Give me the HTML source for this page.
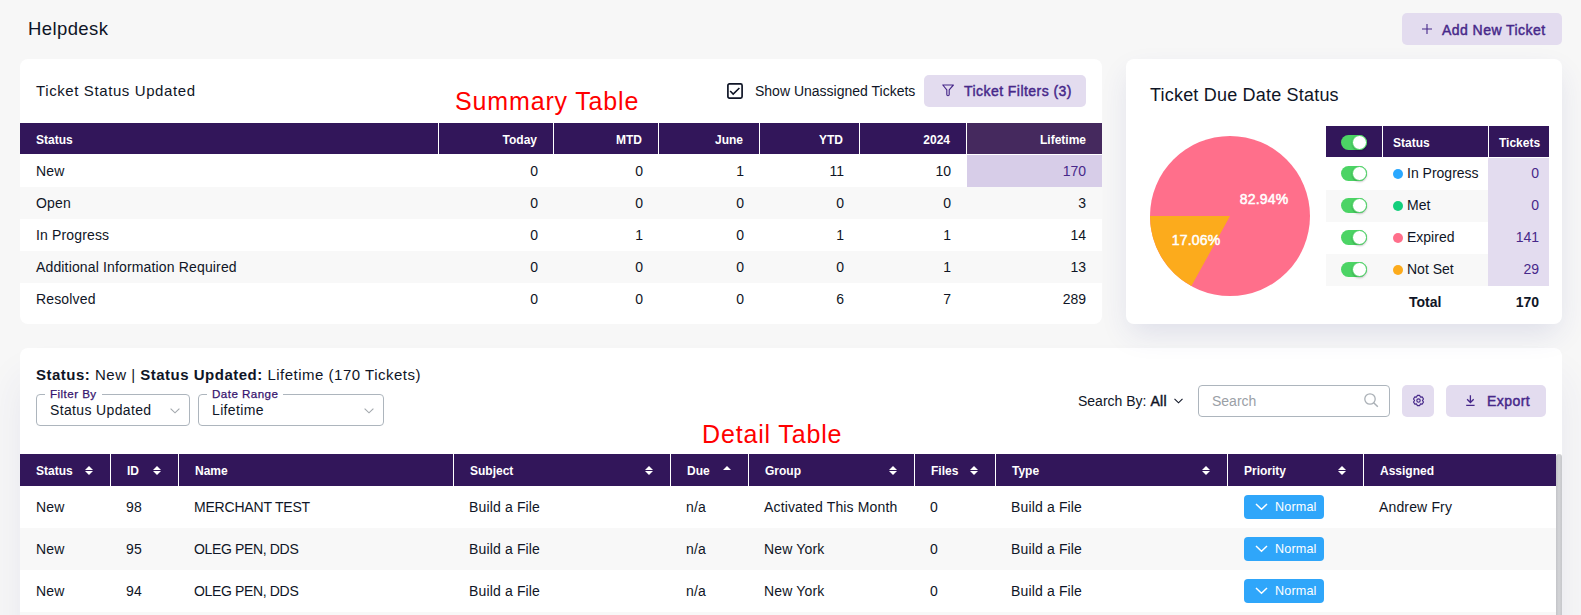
<!DOCTYPE html>
<html><head><meta charset="utf-8">
<style>
*{box-sizing:border-box;margin:0;padding:0}
html,body{width:1581px;height:615px;overflow:hidden;background:#f7f7f7;font-family:"Liberation Sans",sans-serif;color:#0f1526}
.abs{position:absolute;white-space:nowrap}
.card{position:absolute;background:#fff;border-radius:8px}
.btn{position:absolute;background:#e3dcef;border-radius:5px;color:#47288a;font-weight:normal;font-size:14px;letter-spacing:0.45px;-webkit-text-stroke:0.45px #47288a}
table{border-collapse:separate;border-spacing:0;table-layout:fixed}
td,th{white-space:nowrap}
.st th{background:#32165a;color:#fff;font-size:12px;font-weight:bold;height:32px;border-left:1px solid #fff;border-bottom:1px solid #fff;padding:2px 16px 0;text-align:right}
.st th:first-child{border-left:none;text-align:left}
.st td{height:32px;font-size:14px;padding:0 15px 0 16px;text-align:right;border-left:1px solid transparent}
.st td:first-child{text-align:left;border-left:none}
.st td:last-child{padding-right:16px}
.st td:first-child{letter-spacing:0.15px}
.st tr:nth-child(odd) td{background:#f8f8f8}
.st th.lt{background:#45295e}
.st tr td.hl{border-left:1px solid #fff;background:#d7cde8;color:#47288a}
.dt th{background:#32165a;color:#fff;font-size:12px;font-weight:bold;height:32px;border-left:1px solid #fff;padding:2px 16px 0;text-align:left;position:relative}
.dt th:first-child{border-left:none}
.dt td{height:42px;font-size:14px;padding:0 16px;text-align:left;letter-spacing:0.15px}
.dt tr:nth-child(odd) td{background:#f8f8f8}
.sort{position:absolute;right:17.5px;top:12px;width:8px;height:10px}
.sort:before{content:"";position:absolute;left:0;top:0;border-left:4px solid transparent;border-right:4px solid transparent;border-bottom:4px solid #fff}
.s2:after{content:"";position:absolute;left:0;top:5px;border-left:4px solid transparent;border-right:4px solid transparent;border-top:4px solid #fff}
.nb{display:inline-block;margin-left:1px;width:80px;height:24px;background:#2fa6fa;border-radius:4px;color:#fff;font-size:13px;position:relative;vertical-align:middle}
.rt th{background:#32165a;color:#fff;font-size:12px;font-weight:bold;height:32px;border-left:1px solid #fff;border-bottom:1px solid #fff;padding:2px 10px 0;text-align:left}
.rt th:first-child{border-left:none}
.rt td{height:32px;font-size:14px;padding:0 10px 2px;border-left:1px solid transparent}
.rt td:first-child{border-left:none}
.rt tr:nth-child(odd) td{background:#f8f8f8}
.rt tr td.tk{background:#e3dcef;color:#47288a;text-align:right}
.tg{display:inline-block;width:26px;height:15px;background:#4cd465;border-radius:8px;position:relative;vertical-align:middle}
.tg:after{content:"";position:absolute;right:0;top:0;width:15px;height:15px;border-radius:50%;background:#fff;box-shadow:0 1px 2px rgba(0,0,0,.25);border:1px solid #4cd465;box-sizing:border-box}
.dot{display:inline-block;width:10px;height:10px;border-radius:50%;margin-right:4px;vertical-align:-1px}
.red{position:absolute;color:#f00;font-size:25px;white-space:nowrap;letter-spacing:0.85px}
.fs{position:absolute;border:1px solid #adb5bd;border-radius:4px;height:32px}
.fs .lg{position:absolute;top:-8px;left:8px;background:#fff;padding:0 5px 0 5px;font-size:11.6px;letter-spacing:0.45px;color:#36146e;-webkit-text-stroke:0.25px #36146e;line-height:14px}
.fs .vl{position:absolute;left:13px;top:8px;font-size:14px;line-height:14px;letter-spacing:0.35px}
</style></head><body>

<div class="abs" style="left:28px;top:20px;font-size:18.5px;line-height:18px;letter-spacing:0.4px">Helpdesk</div>
<div class="btn" style="left:1402px;top:13px;width:160px;height:32px">
  <svg class="abs" style="left:20px;top:11px" width="10" height="10" viewBox="0 0 10 10"><path d="M5 0V10M0 5H10" stroke="#47288a" stroke-width="1.1"/></svg>
  <span class="abs" style="left:40px;top:10px;line-height:14px">Add New Ticket</span>
</div>

<!-- Summary card -->
<div class="card" style="left:20px;top:59px;width:1082px;height:265px;overflow:hidden">
  <div class="abs" style="left:16px;top:24px;font-size:15px;line-height:15px;letter-spacing:0.6px">Ticket Status Updated</div>
  <svg class="abs" style="left:707px;top:24px" width="16" height="16" viewBox="0 0 16 16"><rect x="0.9" y="0.9" width="14.2" height="14.2" rx="1.5" fill="none" stroke="#0f1526" stroke-width="1.7"/><path d="M3.2 8L6.2 11.1L12.4 5" fill="none" stroke="#0f1526" stroke-width="1.6"/></svg>
  <div class="abs" style="left:735px;top:25px;font-size:14px;line-height:14px">Show Unassigned Tickets</div>
  <div class="btn" style="left:904px;top:16px;width:162px;height:32px">
    <svg class="abs" style="left:18px;top:9px" width="12" height="13" viewBox="0 0 12 13"><path d="M0.8 1H11.4L7.2 5.8V10.6A1.2 1.2 0 0 1 4.8 10.6V5.8Z" fill="none" stroke="#47288a" stroke-width="1.15" stroke-linejoin="round"/></svg>
    <span class="abs" style="left:40px;top:9px;line-height:14px">Ticket Filters (3)</span>
  </div>
  <table class="st" style="position:absolute;left:0;top:64px;width:1082px">
    <colgroup><col style="width:418px"><col style="width:115px"><col style="width:105px"><col style="width:101px"><col style="width:100px"><col style="width:107px"><col style="width:136px"></colgroup>
    <tr><th>Status</th><th>Today</th><th>MTD</th><th>June</th><th>YTD</th><th>2024</th><th class="lt">Lifetime</th></tr>
    <tr><td>New</td><td>0</td><td>0</td><td>1</td><td>11</td><td>10</td><td class="hl" style="padding-right:16px">170</td></tr>
    <tr><td>Open</td><td>0</td><td>0</td><td>0</td><td>0</td><td>0</td><td>3</td></tr>
    <tr><td>In Progress</td><td>0</td><td>1</td><td>0</td><td>1</td><td>1</td><td>14</td></tr>
    <tr><td>Additional Information Required</td><td>0</td><td>0</td><td>0</td><td>0</td><td>1</td><td>13</td></tr>
    <tr><td>Resolved</td><td>0</td><td>0</td><td>0</td><td>6</td><td>7</td><td>289</td></tr>
  </table>
</div>
<div class="red" style="left:455px;top:88px;line-height:26px">Summary Table</div>

<!-- Right card -->
<div class="card" style="left:1126px;top:59px;width:436px;height:265px;box-shadow:0 12px 30px -4px rgba(45,55,140,0.13);z-index:2">
  <div class="abs" style="left:24px;top:27px;font-size:18px;line-height:18px;letter-spacing:0.2px">Ticket Due Date Status</div>
  <svg class="abs" style="left:23px;top:76px" width="162" height="162" viewBox="-81 -81 162 162">
    <circle r="80" fill="#ff6f8b"/>
    <path d="M0 0L-80 0A80 80 0 0 0 -38.6 70.1Z" fill="#fcab1c"/>
    <text x="34" y="-12" fill="#fff" font-size="14" font-family="Liberation Sans" stroke="#fff" stroke-width="0.5" letter-spacing="0.2" text-anchor="middle">82.94%</text>
    <text x="-34" y="29" fill="#fff" font-size="14" font-family="Liberation Sans" stroke="#fff" stroke-width="0.5" letter-spacing="0.2" text-anchor="middle">17.06%</text>
  </svg>
  <table class="rt" style="position:absolute;left:200px;top:67px;width:223px">
    <colgroup><col style="width:56px"><col style="width:106px"><col style="width:61px"></colgroup>
    <tr><th style="padding-left:15px"><span class="tg"></span></th><th>Status</th><th>Tickets</th></tr>
    <tr><td style="padding-left:15px"><span class="tg" style="top:0px"></span></td><td><span class="dot" style="background:#2aa8ff"></span>In Progress</td><td class="tk">0</td></tr>
    <tr><td style="padding-left:15px"><span class="tg" style="top:0px"></span></td><td><span class="dot" style="background:#13cf7c"></span>Met</td><td class="tk">0</td></tr>
    <tr><td style="padding-left:15px"><span class="tg" style="top:0px"></span></td><td><span class="dot" style="background:#ff6f8b"></span>Expired</td><td class="tk">141</td></tr>
    <tr><td style="padding-left:15px"><span class="tg" style="top:0px"></span></td><td><span class="dot" style="background:#fcab1c"></span>Not Set</td><td class="tk">29</td></tr>
    <tr><td style="background:#fff;padding-bottom:0"></td><td style="background:#fff;font-weight:bold;padding-left:26px;padding-bottom:0">Total</td><td style="text-align:right;font-weight:bold;background:#fff;padding-bottom:0">170</td></tr>
  </table>
</div>

<!-- Detail card -->
<div class="card" style="left:20px;top:348px;width:1542px;height:300px;overflow:hidden;box-shadow:0 30px 40px rgba(45,55,140,0.08)">
  <div class="abs" style="left:16px;top:19px;font-size:15px;line-height:15px;letter-spacing:0.5px"><b>Status:</b> New | <b>Status Updated:</b> Lifetime (170 Tickets)</div>
  <div class="fs" style="left:16px;top:46px;width:154px"><span class="lg">Filter By</span><span class="vl">Status Updated</span>
    <svg class="abs" style="left:133px;top:13px" width="10" height="6" viewBox="0 0 10 6"><path d="M0.6 0.6L5 4.8L9.4 0.6" fill="none" stroke="#a3a8ad" stroke-width="1.15"/></svg></div>
  <div class="fs" style="left:178px;top:46px;width:186px"><span class="lg">Date Range</span><span class="vl">Lifetime</span>
    <svg class="abs" style="left:165px;top:13px" width="10" height="6" viewBox="0 0 10 6"><path d="M0.6 0.6L5 4.8L9.4 0.6" fill="none" stroke="#a3a8ad" stroke-width="1.15"/></svg></div>

  <div class="abs" style="left:1058px;top:46px;font-size:14px;line-height:14px">Search By: <span style="-webkit-text-stroke:0.45px #0f1526;letter-spacing:0.3px">All</span></div>
  <svg class="abs" style="left:1154px;top:50px" width="9" height="6" viewBox="0 0 9 6"><path d="M0.5 0.8L4.5 4.8L8.5 0.8" fill="none" stroke="#0f1526" stroke-width="1.1"/></svg>
  <div class="fs" style="left:1178px;top:37px;width:192px"><span class="abs" style="left:13px;top:8px;font-size:14px;line-height:14px;color:#9aa0a6">Search</span>
    <svg class="abs" style="left:165px;top:7px" width="15" height="15" viewBox="0 0 15 15"><circle cx="6" cy="6" r="5.2" fill="none" stroke="#aab0b6" stroke-width="1.3"/><path d="M9.7 9.7L13.8 13.8" stroke="#aab0b6" stroke-width="1.5"/></svg></div>
  <div class="btn" style="left:1382px;top:37px;width:32px;height:32px">
    <svg class="abs" style="left:10px;top:9px" width="13" height="13" viewBox="-0.5 -0.5 13 13"><path d="M7.98 2.58 L7.17 0.93 L4.83 0.93 L4.03 2.58 L2.20 2.45 L1.03 4.48 L2.05 6.00 L1.03 7.52 L2.20 9.55 L4.02 9.42 L4.83 11.07 L7.17 11.07 L7.98 9.42 L9.80 9.55 L10.97 7.52 L9.95 6.00 L10.97 4.48 L9.80 2.45Z" fill="none" stroke="#47288a" stroke-width="1.2" stroke-linejoin="round"/><circle cx="6" cy="6" r="1.7" fill="none" stroke="#47288a" stroke-width="1.15"/></svg>
  </div>
  <div class="btn" style="left:1426px;top:37px;width:100px;height:32px">
    <svg class="abs" style="left:20px;top:10px" width="10" height="12" viewBox="0 0 10 12"><path d="M4.4 0.3V7.3M1.1 4.2L4.4 7.5L7.7 4.2M0.2 10.4H8.6" fill="none" stroke="#47288a" stroke-width="1.3"/></svg>
    <span class="abs" style="left:41px;top:9px;line-height:14px">Export</span>
  </div>

  <table class="dt" style="position:absolute;left:0;top:106px;width:1536px">
    <colgroup><col style="width:90px"><col style="width:68px"><col style="width:275px"><col style="width:217px"><col style="width:78px"><col style="width:166px"><col style="width:81px"><col style="width:232px"><col style="width:136px"><col style="width:193px"></colgroup>
    <tr><th>Status<span class="sort s2"></span></th><th>ID<span class="sort s2"></span></th><th>Name</th><th>Subject<span class="sort s2"></span></th><th>Due<span class="sort s1"></span></th><th>Group<span class="sort s2"></span></th><th>Files<span class="sort s2"></span></th><th>Type<span class="sort s2"></span></th><th>Priority<span class="sort s2"></span></th><th>Assigned</th></tr>
    <tr><td>New</td><td>98</td><td style="letter-spacing:-0.2px">MERCHANT TEST</td><td>Build a File</td><td>n/a</td><td>Activated This Month</td><td>0</td><td>Build a File</td><td><span class="nb"><svg class="abs" style="left:11px;top:8px" width="13" height="8" viewBox="0 0 13 8"><path d="M1 1L6.5 6.3L12 1" fill="none" stroke="#fff" stroke-width="1.5"/></svg><span class="abs" style="left:31px;top:6px;line-height:13px;font-size:12.6px">Normal</span></span></td><td>Andrew Fry</td></tr>
    <tr><td>New</td><td>95</td><td style="letter-spacing:-0.35px">OLEG PEN, DDS</td><td>Build a File</td><td>n/a</td><td>New York</td><td>0</td><td>Build a File</td><td><span class="nb"><svg class="abs" style="left:11px;top:8px" width="13" height="8" viewBox="0 0 13 8"><path d="M1 1L6.5 6.3L12 1" fill="none" stroke="#fff" stroke-width="1.5"/></svg><span class="abs" style="left:31px;top:6px;line-height:13px;font-size:12.6px">Normal</span></span></td><td></td></tr>
    <tr><td>New</td><td>94</td><td style="letter-spacing:-0.35px">OLEG PEN, DDS</td><td>Build a File</td><td>n/a</td><td>New York</td><td>0</td><td>Build a File</td><td><span class="nb"><svg class="abs" style="left:11px;top:8px" width="13" height="8" viewBox="0 0 13 8"><path d="M1 1L6.5 6.3L12 1" fill="none" stroke="#fff" stroke-width="1.5"/></svg><span class="abs" style="left:31px;top:6px;line-height:13px;font-size:12.6px">Normal</span></span></td><td></td></tr>
    <tr><td></td><td></td><td></td><td></td><td></td><td></td><td></td><td></td><td></td><td></td></tr>
  </table>
  <div class="abs" style="left:1536px;top:106px;width:6px;height:200px;background:linear-gradient(to right,#c3c4c8,#d3d4d7 50%,#c6c7cb);border-radius:3px 3px 0 0"></div>
</div>
<div class="red" style="left:702px;top:421px;line-height:26px">Detail Table</div>

</body></html>
